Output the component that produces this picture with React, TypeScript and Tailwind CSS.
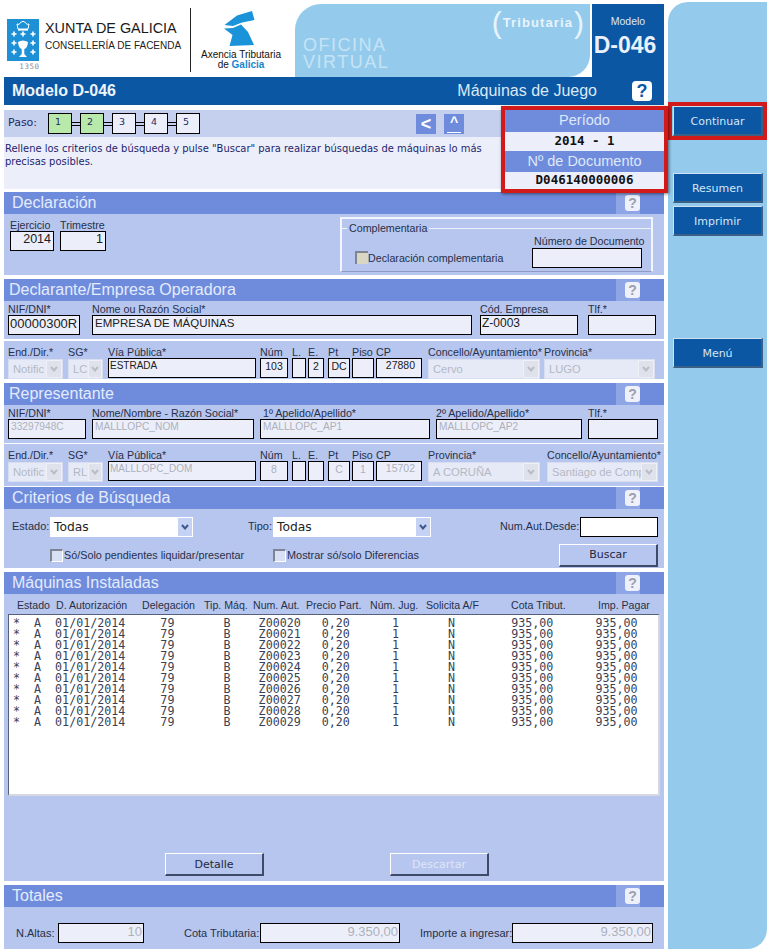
import React from "react";

const arial = "font-['Liberation_Sans',Arial,sans-serif]";
const verd = "font-['DejaVu_Sans',Verdana,sans-serif]";

function Help() {
  return (
    <div className="w-[24px] h-full bg-[#8fa6e6] flex items-center justify-end">
      <div className={"w-[15px] h-[16px] rounded-[3px] flex items-center justify-center text-[14px] leading-none font-bold bg-[#eef1fb] text-[#9aa0ae] " + arial}>?</div>
    </div>
  );
}

function Head({ title, className = "", wide = false }: { title: string; className?: string; wide?: boolean }) {
  return (
    <div className={"h-[22px] bg-[#6f8cdc] flex items-center justify-between pr-[24px] shrink-0 " + className}>
      <span className={"text-[16px] leading-none text-[#e4ebfc] " + (wide ? "pl-[8px] " : "pl-[5px] ") + arial}>{title}</span>
      <Help />
    </div>
  );
}

function Col({ className, label, children }: { className: string; label: string; children: React.ReactNode }) {
  return (
    <div className={"flex flex-col shrink-0 " + className}>
      <div className={"h-[12px] leading-[12px] text-[10.7px] text-[#27304a] whitespace-nowrap " + arial}>{label}</div>
      {children}
    </div>
  );
}

function Box({ v = "", dis = false, right = false, center = false, className = "" }: { v?: string; dis?: boolean; right?: boolean; center?: boolean; className?: string }) {
  return (
    <div
      className={
        "h-[20px] border border-black bg-[#eceffa] px-[1px] flex items-start overflow-hidden whitespace-nowrap leading-[13px] " +
        arial + " " +
        (right ? "justify-end " : center ? "justify-center " : "") +
        (dis ? "text-[#adb1bc] " : "text-[#202020] ") +
        className
      }
    >
      {v}
    </div>
  );
}

function Chev({ color = "#b9bdc8" }: { color?: string }) {
  return (
    <svg width="8" height="6" viewBox="0 0 8 6" fill="none">
      <path d="M1 1 L4 4.5 L7 1" stroke={color} strokeWidth="2" />
    </svg>
  );
}

function DisSel({ v, className = "" }: { v: string; className?: string }) {
  return (
    <div className={"h-[20px] mt-[1px] flex bg-[#e6eaf7] border border-[#d8deef] overflow-hidden " + className}>
      <div className={"flex-1 min-w-0 pl-[4px] flex items-center whitespace-nowrap overflow-hidden text-[11.2px] text-[#b4b8c4] " + arial}>{v}</div>
      <div className="w-[16px] shrink-0 bg-[#dfe2ea] border border-[#eef0f6] flex items-center justify-center">
        <Chev />
      </div>
    </div>
  );
}

function SideBtn({ t, className = "" }: { t: string; className?: string }) {
  return (
    <div className={"w-[90px] h-[30px] pt-[3px] bg-[#0b57a4] border-t border-l border-[#cfe0f0] border-b-[2px] border-r-[2px] border-b-[#3c5f86] border-r-[#3c5f86] flex items-center justify-center text-[11px] text-[#d6e6f6] shrink-0 " + verd + " " + className}>
      {t}
    </div>
  );
}

function FormBtn({ t, dis = false, className = "" }: { t: string; dis?: boolean; className?: string }) {
  return (
    <div className={"w-[99px] h-[23px] pt-[2px] bg-[#b7c6ee] border-t border-l border-white border-b-[2px] border-r-[2px] border-b-[#3f4a68] border-r-[#3f4a68] flex items-center justify-center text-[11px] " + verd + " " + (dis ? "text-[#dfe5f8]" : "text-[#1f2740]") + " " + className}>
      {t}
    </div>
  );
}

function Check({ className = "" }: { className?: string }) {
  return <div className={"w-[13px] h-[13px] border-t-[2px] border-l-[2px] border-[#7f8494] shrink-0 " + className} />;
}

function Addr({ a, b, c, d, e, f, g, h, rep }: { a: string; b: string; c: string; d?: string; e?: string; f?: string; g?: string; h?: string; rep?: boolean }) {
  const s = "text-[10.5px] pt-[1px]";
  return (
    <>
      <Col className="w-[55px]" label="End./Dir.*"><DisSel v={a} /></Col>
      <Col className="w-[35px] ml-[5px]" label="SG*"><DisSel v={b} className="[&>div:last-child]:w-[14px]" /></Col>
      <Col className="w-[148px] ml-[5px]" label="Vía Pública*"><Box v={c} dis={rep} className="text-[10px]" /></Col>
      <Col className="w-[28px] ml-[4px]" label="Núm"><Box v={d} dis={rep} center className={s} /></Col>
      <Col className="w-[14px] ml-[4px]" label="L."><Box className={s} /></Col>
      <Col className="w-[16px] ml-[2px]" label="E."><Box v={e} dis={rep} center className={s} /></Col>
      <Col className="w-[22px] ml-[4px]" label="Pt"><Box v={f} dis={rep} center className={s} /></Col>
      <Col className="w-[22px] ml-[2px]" label="Piso"><Box v={g} dis={rep} center className={s} /></Col>
      <Col className="w-[46px] ml-[2px]" label="CP"><Box v={h} dis={rep} right className="text-[10.5px] pr-[6px]" /></Col>
    </>
  );
}

const listing = Array.from({ length: 10 }, (_, i) =>
  `*  A  01/01/2014     79       B    Z000${20 + i}   0,20      1       N        935,00      935,00`
).join("\n");

function Arms() {
  const crosses = [
    [12, 34], [21, 34], [31, 34],
    [12, 43], [31, 43],
    [12, 52], [31, 52],
  ];
  return (
    <svg width="34" height="44" viewBox="4 18 34 44" className="shrink-0">
      <rect x="5" y="19" width="32" height="42" fill="#1d90d6" />
      <path d="M16 29 L15 24 Q17.5 25.5 18.5 22.5 Q21 20 23.5 22.5 Q24.5 25.5 27 24 L26 29 Z" fill="none" stroke="#fff" strokeWidth="1" />
      <rect x="16" y="29" width="10" height="1.6" fill="#fff" />
      {crosses.map(([x, y], k) => (
        <path key={k} d={`M${x - 2.5} ${y} H${x + 2.5} M${x} ${y - 2.5} V${y + 2.5}`} stroke="#fff" strokeWidth="1.6" />
      ))}
      <path d="M16 42 Q21 39 26 42 Q25.5 48 22.3 49 L22.3 54 L25 57 L17 57 L19.7 54 L19.7 49 Q16.5 48 16 42 Z" fill="#fff" />
    </svg>
  );
}

function AtgLogo() {
  return (
    <svg width="40" height="38" viewBox="220 10 40 38" className="shrink-0">
      <path d="M223.5 25 L236 15.5 L251 11 L253.5 20 L241 22.5 L232 26 Z" fill="#1a93d8" />
      <path d="M223 28.5 L232 28 L240 24.5 L247 32 L253 45 L228.5 46 L231.5 35 Z" fill="#1a93d8" />
    </svg>
  );
}

export default function App() {
  return (
    <div className={"w-[767px] h-[949px] bg-white flex overflow-hidden relative " + arial}>
      <div className="w-[660px] ml-[4px] shrink-0 flex flex-col relative">
        {/* header */}
        <div className="h-[73px] mt-[4px] flex shrink-0">
          <div className="w-[291px] flex shrink-0">
            <div className="flex flex-col items-center mt-[14px] w-[37px]">
              <Arms />
              <div className="text-[7.5px] leading-[9px] tracking-[0.6px] text-[#8a8f96] ml-[14px] font-['DejaVu_Sans_Mono',monospace]">1350</div>
            </div>
            <div className="ml-[4px] mt-[15px] flex flex-col w-[142px]">
              <div className={"text-[14.4px] leading-[18px] text-[#1a1a1a] whitespace-nowrap " + arial}>XUNTA DE GALICIA</div>
              <div className={"text-[10px] leading-[16px] mt-[1px] text-[#222] whitespace-nowrap " + arial}>CONSELLERÍA DE FACENDA</div>
            </div>
            <div className="w-px h-[64px] bg-[#222] ml-[3px] mt-[4px]" />
            <div className="ml-[10px] w-[80px] flex flex-col items-center">
              <div className="mt-[6px]"><AtgLogo /></div>
              <div className={"text-[10px] leading-[10px] mt-[2px] whitespace-nowrap text-[#111] " + arial}>Axencia Tributaria</div>
              <div className={"text-[10px] leading-[10px] whitespace-nowrap text-[#111] " + arial}>de <span className="text-[#1a86cc] font-bold">Galicia</span></div>
            </div>
          </div>
          <div className="w-[295px] bg-[#94cbec] rounded-tl-[26px] rounded-br-[22px] shrink-0 flex justify-between overflow-hidden">
            <div className={"pl-[8px] pt-[33px] text-[#c6e3f5] text-[18px] leading-[17px] tracking-[1.5px] " + arial}>
              OFICINA<br />VIRTUAL
            </div>
            <div className={"flex items-center h-[32px] mt-[3px] mr-[6px] text-[#e8f4fb] " + arial}>
              <span className="text-[30px] leading-none font-light">(</span>
              <span className="text-[13px] font-bold tracking-[1.1px] mx-[1px]">Tributaria</span>
              <span className="text-[30px] leading-none font-light">)</span>
            </div>
          </div>
          <div className="w-[72px] ml-[2px] bg-[#0b57a4] flex flex-col items-center shrink-0">
            <div className={"text-[10.5px] text-[#dbe8f5] mt-[10px] leading-[14px] " + arial}>Modelo</div>
            <div className={"text-[23px] font-bold text-[#e9f1fa] leading-[24px] mt-[5px] pr-[6px] whitespace-nowrap " + arial}>D-046</div>
          </div>
        </div>

        {/* title */}
        <div className="h-[28px] bg-[#0b57a4] flex items-center shrink-0 text-white">
          <span className={"ml-[8px] text-[16px] font-bold text-[#eef4fb] " + arial}>Modelo D-046</span>
          <span className={"ml-auto text-[16px] text-[#dce9f6] " + arial}>Máquinas de Juego</span>
          <div className={"ml-[35px] mr-[12px] w-[20px] h-[20px] rounded-[4px] bg-white text-[#0b57a4] text-[18px] font-bold flex items-center justify-center leading-none " + arial}>?</div>
        </div>

        {/* Paso */}
        <div className="mt-[5px] h-[27px] bg-[#c5cfee] flex items-center shrink-0">
          <span className={"ml-[4px] w-[40px] text-[11px] text-[#232a66] " + verd}>Paso:</span>
          {["1", "2", "3", "4", "5"].map((n, i) => (
            <div key={n} className="flex items-center">
              {i > 0 && <div className="w-[8px] h-[4px] border-y border-black" />}
              <div className={"w-[24px] h-[21px] border border-black flex items-center justify-center pr-[4px] pb-[2px] text-[9.5px] text-[#1f2a60] " + verd + " " + (i < 2 ? "bg-[#b9e8ab]" : "bg-[#eceffa]")}>{n}</div>
            </div>
          ))}
          <div className={"ml-[216px] w-[20px] h-[20px] bg-[#6f8cdc] text-white font-bold text-[18px] flex items-center justify-center leading-none " + arial}>&lt;</div>
          <div className={"ml-[8px] w-[20px] h-[20px] bg-[#6f8cdc] text-white font-bold text-[14px] flex flex-col items-center justify-start leading-none pt-[1px] " + arial}>^<div className="w-[14px] h-px bg-white mt-[3px]" /></div>
        </div>
        <div className={"h-[52px] bg-[#eceffa] shrink-0 pl-[1px] pt-[6px] pr-[174px] text-[9.95px] leading-[12.5px] text-[#1e1e6e] " + verd}>
          Rellene los criterios de búsqueda y pulse "Buscar" para realizar búsquedas de máquinas lo más precisas posibles.
        </div>

        {/* Highlighted period box */}
        <div className="absolute left-[497px] top-[106px] w-[167px] h-[87px] border-[4px] border-[#d31a1a] shadow-[1px_1px_3px_rgba(0,0,0,0.5)] flex flex-col">
          <div className={"h-[22px] bg-[#6f8cdc] text-[#dfe7fb] text-[14.5px] flex items-center justify-center " + arial}>Período</div>
          <div className="h-[19px] bg-[#eceffa] text-[#111] text-[12.5px] font-bold flex items-center justify-center font-['DejaVu_Sans_Mono',monospace]">2014 - 1</div>
          <div className={"h-[21px] bg-[#6f8cdc] text-[#dfe7fb] text-[14.5px] flex items-center justify-center " + arial}>Nº de Documento</div>
          <div className="h-[17px] bg-[#eceffa] text-[#111] text-[12.5px] font-bold flex items-center justify-center font-['DejaVu_Sans_Mono',monospace]">D046140000006</div>
        </div>

        {/* Declaración */}
        <Head title="Declaración" wide className="mt-[3px]" />
        <div className="h-[61px] bg-[#b7c6ee] flex shrink-0">
          <div className="flex pl-[6px] pt-[5px] items-start">
            <Col className="w-[44px]" label="Ejercicio"><Box v="2014" right className="text-[12.5px] pr-[2px] pt-[1px]" /></Col>
            <Col className="w-[46px] ml-[6px]" label="Trimestre"><Box v="1" right className="text-[12.5px] pr-[2px] pt-[1px]" /></Col>
          </div>
          <div className="ml-auto mr-[11px] mt-[3px] mb-[3px] w-[313px] border-t-2 border-x-2 border-b border-t-[#f3f5fc] border-x-[#f3f5fc] border-b-[#8f9bc4]">
            <fieldset className="mt-[3px] border-t border-[#eef1fb]">
              <legend className={"ml-[5px] px-[2px] text-[10.7px] leading-[12px] text-[#27304a] " + arial}>Complementaria</legend>
              <div className="flex items-end">
                <Check className="mb-[4px] ml-[13px] bg-[#d9d6c4]" />
                <span className={"mb-[4px] text-[10.7px] leading-[12px] text-[#27304a] whitespace-nowrap " + arial}>Declaración complementaria</span>
                <div className="ml-auto mr-[9px] flex flex-col w-[110px]">
                  <span className={"text-[10.7px] leading-[14px] pl-[2px] text-[#27304a] whitespace-nowrap " + arial}>Número de Documento</span>
                  <Box />
                </div>
              </div>
            </fieldset>
          </div>
        </div>

        {/* Declarante */}
        <Head title="Declarante/Empresa Operadora" className="mt-[4px]" />
        <div className="h-[38px] bg-[#b7c6ee] flex pl-[4px] pt-[2px] shrink-0">
          <Col className="w-[72px]" label="NIF/DNI*"><Box v="00000300R" className="text-[13px] pt-[1px]" /></Col>
          <Col className="w-[380px] ml-[12px]" label="Nome ou Razón Social*"><Box v="EMPRESA DE MÁQUINAS" className="text-[11.5px] pt-[1px] pl-[2px]" /></Col>
          <Col className="w-[98px] ml-[8px]" label="Cód. Empresa"><Box v="Z-0003" className="text-[12px] pt-[1px]" /></Col>
          <Col className="w-[68px] ml-[10px]" label="Tlf.*"><Box /></Col>
        </div>
        <div className="h-[38px] mt-[2px] bg-[#b7c6ee] flex pl-[4px] pt-[5px] shrink-0">
          <Addr a="Notific" b="LC" c="ESTRADA" d="103" e="2" f="DC" h="27880" />
          <Col className="w-[112px] ml-[6px]" label="Concello/Ayuntamiento*"><DisSel v="Cervo" /></Col>
          <Col className="w-[111px] ml-[4px]" label="Provincia*"><DisSel v="LUGO" /></Col>
        </div>

        {/* Representante */}
        <Head title="Representante" className="mt-[4px]" />
        <div className="h-[38px] bg-[#b7c6ee] flex pl-[4px] pt-[2px] shrink-0">
          <Col className="w-[78px]" label="NIF/DNI*"><Box v="33297948C" dis className="text-[10.2px] pl-[2px]" /></Col>
          <Col className="w-[162px] ml-[6px]" label="Nome/Nombre - Razón Social*"><Box v="MALLLOPC_NOM" dis className="text-[10.2px] pl-[2px]" /></Col>
          <Col className="w-[170px] ml-[6px]" label={"\u00A01º Apelido/Apellido*"}><Box v="MALLLOPC_AP1" dis className="text-[10.2px] pl-[2px]" /></Col>
          <Col className="w-[146px] ml-[6px]" label="2º Apelido/Apellido*"><Box v="MALLLOPC_AP2" dis className="text-[10.2px] pl-[2px]" /></Col>
          <Col className="w-[70px] ml-[6px]" label="Tlf.*"><Box /></Col>
        </div>
        <div className="h-[42px] mt-[1px] bg-[#b7c6ee] flex pl-[4px] pt-[5px] shrink-0">
          <Addr rep a="Notific" b="RL" c="MALLLOPC_DOM" d="8" f="C" g="1" h="15702" />
          <Col className="w-[112px] ml-[6px]" label="Provincia*"><DisSel v="A CORUÑA" /></Col>
          <Col className="w-[111px] ml-[7px]" label="Concello/Ayuntamiento*"><DisSel v="Santiago de Comp" /></Col>
        </div>

        {/* Criterios */}
        <Head title="Criterios de Búsqueda" wide className="mt-[1px]" />
        <div className="h-[59px] bg-[#b7c6ee] flex flex-col shrink-0">
          <div className="flex items-center mt-[7px] h-[21px]">
            <span className={"ml-[8px] w-[38px] text-[11px] text-[#27304a] " + arial}>Estado:</span>
            <div className="w-[143px] h-[20px] bg-white flex">
              <span className={"flex-1 pl-[4px] text-[12.3px] leading-[21px] text-[#222] " + verd}>Todas</span>
              <div className="w-[16px] bg-[#c5d2f4] border border-white flex items-center justify-center"><Chev color="#3d5a8c" /></div>
            </div>
            <span className={"ml-[55px] w-[25px] text-[11px] text-[#27304a] " + arial}>Tipo:</span>
            <div className="w-[158px] h-[20px] bg-white flex">
              <span className={"flex-1 pl-[4px] text-[12.3px] leading-[21px] text-[#222] " + verd}>Todas</span>
              <div className="w-[16px] bg-[#c5d2f4] border border-white flex items-center justify-center"><Chev color="#3d5a8c" /></div>
            </div>
            <span className={"ml-[69px] w-[80px] text-[10.8px] text-[#27304a] whitespace-nowrap " + arial}>Num.Aut.Desde:</span>
            <div className="w-[78px] h-[20px] bg-white border border-black" />
          </div>
          <div className="flex items-center mt-[7px] h-[22px]">
            <Check className="ml-[46px] bg-[#d8e0f6] border-b border-r border-b-white border-r-white" />
            <span className={"ml-[1px] w-[209px] text-[10.8px] text-[#27304a] whitespace-nowrap " + arial}>Só/Solo pendientes liquidar/presentar</span>
            <Check className="bg-[#d8e0f6] border-b border-r border-b-white border-r-white" />
            <span className={"ml-[1px] text-[10.9px] text-[#27304a] whitespace-nowrap " + arial}>Mostrar só/solo Diferencias</span>
            <FormBtn t="Buscar" className="ml-auto mr-[6px]" />
          </div>
        </div>

        {/* Máquinas */}
        <Head title="Máquinas Instaladas" wide className="mt-[4px]" />
        <div className="h-[287px] bg-[#b7c6ee] flex flex-col shrink-0">
          <div className={"flex h-[20px] pt-[3px] items-center text-[10.6px] text-[#27304a] whitespace-nowrap " + arial}>
            <span className="ml-[13px] w-[39px]">Estado</span>
            <span className="w-[86px]">D. Autorización</span>
            <span className="w-[62px]">Delegación</span>
            <span className="w-[49px]">Tip. Máq.</span>
            <span className="w-[53px]">Num. Aut.</span>
            <span className="w-[64px]">Precio Part.</span>
            <span className="w-[56px]">Núm. Jug.</span>
            <span className="w-[85px]">Solicita A/F</span>
            <span className="w-[87px]">Cota Tribut.</span>
            <span>Imp. Pagar</span>
          </div>
          <div className="ml-[4px] w-[652px] h-[182px] bg-white border-t border-l border-[#55607a] border-b-2 border-r-2 border-b-[#d5d8de] border-r-[#d5d8de] pl-[4px] pt-[3px] overflow-hidden whitespace-pre leading-[11px] text-[11.67px] text-[#3a3f55] font-['DejaVu_Sans_Mono',monospace]">
            {listing}
          </div>
          <div className="flex mt-[57px]">
            <FormBtn t="Detalle" className="ml-[161px]" />
            <FormBtn t="Descartar" dis className="ml-[126px]" />
          </div>
        </div>

        {/* Totales */}
        <Head title="Totales" wide className="mt-[4px]" />
        <div className="flex-1 bg-[#b7c6ee] flex items-start pt-[16px]">
          <span className={"ml-[12px] w-[42px] text-[11px] leading-[20px] text-[#27304a] " + arial}>N.Altas:</span>
          <Box v="10" dis right className="w-[86px] text-[13px] leading-[16px]" />
          <span className={"ml-[40px] w-[76px] text-[11px] leading-[20px] text-[#27304a] whitespace-nowrap " + arial}>Cota Tributaria:</span>
          <Box v="9.350,00" dis right className="w-[140px] text-[13px] leading-[16px]" />
          <span className={"ml-[20px] w-[92px] text-[11px] leading-[20px] text-[#27304a] whitespace-nowrap " + arial}>Importe a ingresar:</span>
          <Box v="9.350,00" dis right className="w-[141px] text-[13px] leading-[16px]" />
        </div>
      </div>

      {/* Sidebar */}
      <div className="w-[99px] ml-[4px] mt-[2px] h-[947px] bg-[#94cbec] rounded-tl-[20px] rounded-br-[20px] flex flex-col shrink-0">
        <div className="mt-[100px] w-[99px] h-[38px] border-[4px] border-[#d31a1a] flex items-center pl-[1px] shrink-0">
          <SideBtn t="Continuar" />
        </div>
        <SideBtn t="Resumen" className="mt-[33px] ml-[5px]" />
        <SideBtn t="Imprimir" className="mt-[3px] ml-[5px]" />
        <SideBtn t="Menú" className="mt-[102px] ml-[5px]" />
      </div>
    </div>
  );
}
